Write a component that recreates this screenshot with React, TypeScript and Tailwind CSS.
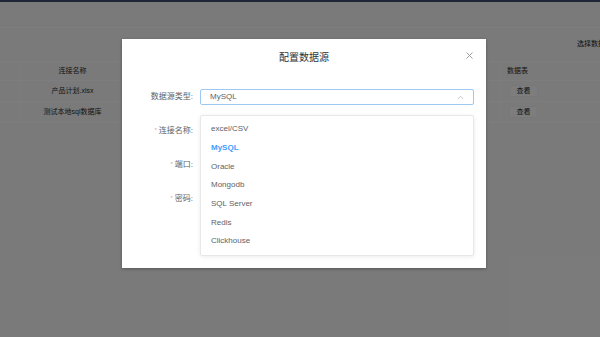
import React from "react";

const font = { fontFamily: '"Liberation Sans", "Noto Sans CJK SC", sans-serif' };

function Page() {
  return (
    <div className="flex h-full w-full flex-col bg-[#f5f5f5]">
      <div className="h-[2px] bg-[#3a4a6e]" />
      <div className="h-[26px] border-b border-[#fafafa]" />
      <div className="flex h-[34px] items-center justify-end border-b border-[#fafafa]">
        <span className="w-[23px] overflow-hidden whitespace-nowrap text-[7px] text-[#222]">选择数据源</span>
      </div>
      <div className="flex flex-col text-[7px] text-[#2a2a2a]">
        <div className="flex h-[19px] items-center border-b border-[#fafafa]">
          <div className="h-full w-[21px] border-r border-[#fafafa]" />
          <div className="w-[103px] text-center">连接名称</div>
          <div className="flex-1" />
          <div className="flex h-full w-[100px] items-center border-l border-[#fafafa] pl-[6px]">数据表</div>
        </div>
        {["产品计划.xlsx", "测试本地sql数据库"].map((n) => (
          <div key={n} className="flex h-[21px] items-center border-b border-[#fafafa]">
            <div className="h-full w-[21px] border-r border-[#fafafa]" />
            <div className="w-[103px] text-center">{n}</div>
            <div className="flex-1" />
            <div className="flex h-full w-[100px] items-center border-l border-[#fafafa] pl-[8px]">
              <span className="flex h-[12px] w-[29px] items-center justify-center rounded-[2px] border border-[#f0f0f0] bg-[#fbfbfb]">查看</span>
            </div>
          </div>
        ))}
      </div>
    </div>
  );
}

const options = ["excel/CSV", "MySQL", "Oracle", "Mongodb", "SQL Server", "Redis", "Clickhouse", "PostgreSQL"];

export default function App() {
  return (
    <div className="relative h-[337px] w-[600px] overflow-hidden" style={font}>
      <Page />
      <div className="absolute inset-0 bg-black/50" />
      <div className="absolute left-[122px] top-[39px] flex h-[229px] w-[364px] flex-col bg-white shadow-[0_1px_3px_rgba(0,0,0,0.3)]">
        <div className="relative flex h-[36px] items-center justify-center">
          <span className="text-[10px] text-[#303133]">配置数据源</span>
          <svg className="absolute right-[13px] top-[13px]" width="7" height="7" viewBox="0 0 7 7">
            <path d="M0.5 0.5L6.5 6.5M6.5 0.5L0.5 6.5" stroke="#909399" strokeWidth="0.9" />
          </svg>
        </div>
        <div className="relative flex flex-col gap-[18px] pt-[14px] text-[8px] text-[#606266]">
          {[
            { label: "数据源类型:", req: false, select: true },
            { label: "连接名称:", req: true },
            { label: "端口:", req: true },
            { label: "密码:", req: true },
          ].map((r) => (
            <div key={r.label} className="flex h-[16px] items-center">
              <div className="w-[71px] text-right">
                {r.req && <span className="relative top-[-1px] mr-[2px] text-[6px] text-[#e89a9a]">*</span>}
                {r.label}
              </div>
              <div className={`ml-[7px] flex h-[16px] w-[274px] items-center justify-between rounded-[2px] border px-[9px] ${r.select ? "border-[#9cc8f2]" : "border-[#dcdfe6]"}`}>
                <span>{r.select ? "MySQL" : ""}</span>
                {r.select && (
                  <svg width="7" height="5" viewBox="0 0 7 5">
                    <path d="M0.8 4L3.5 1.3L6.2 4" stroke="#c0c4cc" strokeWidth="0.9" fill="none" />
                  </svg>
                )}
              </div>
            </div>
          ))}
          <div className="absolute left-[78px] top-[40px] h-[141px] w-[274px] overflow-hidden rounded-[2px] border border-[#e8e8e8] bg-white py-[4px] shadow-[0_1px_4px_rgba(0,0,0,0.08)]">
            {options.map((o) => (
              <div
                key={o}
                className={`flex h-[18.7px] items-center px-[10px] text-[8px] ${o === "MySQL" ? "font-bold text-[#409eff]" : "text-[#606266]"}`}
              >
                {o}
              </div>
            ))}
          </div>
        </div>
      </div>
    </div>
  );
}
